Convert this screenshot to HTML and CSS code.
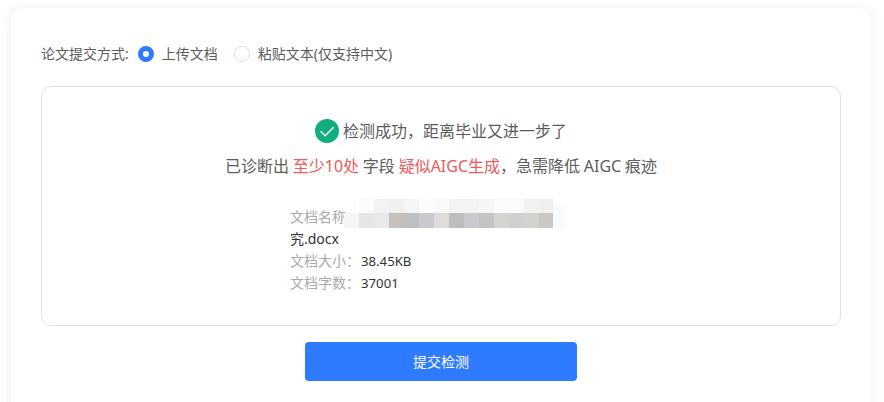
FILE: index.html
```html
<!DOCTYPE html>
<html lang="zh-CN">
<head>
    <title>论文检测</title>
    <meta charset="UTF-8">
    <meta name="viewport" content="width=device-width, initial-scale=1.0">
    <link rel="stylesheet" href="styles.css">
</head>
<body>
    <div class="card">
        <div class="mode-row">
            <span class="mode-label">论文提交方式:</span>
            <label class="radio radio-on"><span class="radio-dot"></span><span>上传文档</span></label>
            <label class="radio"><span class="radio-dot"></span><span>粘贴文本(仅支持中文)</span></label>
        </div>

        <div class="result">
            <div class="result-title">
                <svg class="check-icon" viewBox="0 0 24 24" width="24" height="24">
                    <circle cx="12" cy="12" r="12" fill="#0fae7c"/>
                    <path d="M5.6 12.2l4.6 4.6 8.4-8.6" fill="none" stroke="#fff" stroke-width="1.5"/>
                </svg>
                <span>检测成功，距离毕业又进一步了</span>
            </div>
            <p class="result-desc">已诊断出 <em>至少10处</em> 字段 <em>疑似AIGC生成</em>，急需降低 AIGC 痕迹</p>

            <div class="doc-info">
                <div class="doc-name">
                    <span class="doc-label">文档名称</span>
                    <svg class="mosaic" viewBox="0 0 225 36" width="225" height="36">
                        <defs><filter id="soft"><feGaussianBlur stdDeviation="0.7"/></filter></defs>
                        <g filter="url(#soft)">
                            <rect x="15" y="2" width="15" height="14" fill="#fbfbfb"/>
                            <rect x="30" y="2" width="15" height="14" fill="#f3f3f3"/>
                            <rect x="45" y="2" width="15" height="14" fill="#f0f0f0"/>
                            <rect x="60" y="2" width="15" height="14" fill="#f4f6f6"/>
                            <rect x="75" y="2" width="15" height="14" fill="#fcfcfa"/>
                            <rect x="90" y="2" width="15" height="14" fill="#f9f9f9"/>
                            <rect x="105" y="2" width="30" height="14" fill="#f4f3f3"/>
                            <rect x="135" y="2" width="15" height="14" fill="#f6f6f5"/>
                            <rect x="150" y="2" width="30" height="14" fill="#fbfbfb"/>
                            <rect x="180" y="2" width="15" height="14" fill="#f3f2f1"/>
                            <rect x="195" y="2" width="14" height="14" fill="#f0efed"/>
                            <rect x="0" y="16" width="15" height="15" fill="#f6f6f6"/>
                            <rect x="15" y="16" width="15" height="15" fill="#e6e6e8"/>
                            <rect x="30" y="16" width="15" height="15" fill="#e9e9ea"/>
                            <rect x="45" y="16" width="15" height="15" fill="#c5bfbd"/>
                            <rect x="60" y="16" width="15" height="15" fill="#bfbfc2"/>
                            <rect x="75" y="16" width="15" height="15" fill="#c9c9d0"/>
                            <rect x="90" y="16" width="15" height="15" fill="#dfdcda"/>
                            <rect x="105" y="16" width="15" height="15" fill="#bfbcbe"/>
                            <rect x="120" y="16" width="15" height="15" fill="#c8cacd"/>
                            <rect x="135" y="16" width="15" height="15" fill="#c6c3c6"/>
                            <rect x="150" y="16" width="15" height="15" fill="#d3d5d0"/>
                            <rect x="165" y="16" width="15" height="15" fill="#cfd0ce"/>
                            <rect x="180" y="16" width="15" height="15" fill="#d2d2ce"/>
                            <rect x="195" y="16" width="14" height="15" fill="#c9c8c2"/>
                            <rect x="209" y="8" width="12" height="23" fill="#f9fafb"/>
                        </g>
                    </svg>
                </div>
                <div class="doc-value">究.docx</div>
                <div class="doc-row"><span class="doc-label">文档大小：</span><span class="doc-num">38.45KB</span></div>
                <div class="doc-row"><span class="doc-label">文档字数：</span><span class="doc-num">37001</span></div>
            </div>
        </div>

        <button class="submit-btn" type="button">提交检测</button>
    </div>
</body>
</html>
```

FILE: styles.css
```css
body {
    margin: 0;
    height: 402px;
    overflow: hidden;
    background: #fff;
    font-family: "Noto Sans", "Noto Sans CJK SC", sans-serif;
    font-size: 14px;
    color: #5c5c5c;
}

.card {
    margin: 8px 13px 0 11px;
    padding: 34px 30px 40px;
    background: #fff;
    border-radius: 12px;
    box-shadow: 0 0 12px rgba(190, 210, 215, 0.35);
}

.mode-row {
    display: flex;
    align-items: center;
    height: 24px;
}

.mode-row span:not(.radio-dot) {
    padding-bottom: 2px;
}

.mode-label {
    margin-right: 9px;
}

.radio {
    display: flex;
    align-items: center;
    margin-right: 16px;
}

.radio-dot {
    box-sizing: border-box;
    width: 16px;
    height: 16px;
    margin-right: 8px;
    border: 1px solid #dcdcdc;
    border-radius: 50%;
    background: #fff;
}

.radio-on .radio-dot {
    border: 5px solid #2f7bff;
}

.result {
    box-sizing: border-box;
    height: 240px;
    margin-top: 20px;
    padding-top: 32px;
    border: 1px solid #e2e2e2;
    border-radius: 10px;
}

.result-title {
    display: flex;
    justify-content: center;
    align-items: center;
    gap: 4px;
    height: 24px;
    font-size: 16px;
}

.result-title span {
    padding-bottom: 2px;
}

.result-desc {
    margin: 11px 0 0;
    text-align: center;
    font-size: 16px;
    line-height: 24px;
    word-spacing: -0.4px;
}

.result-desc em {
    font-style: normal;
    color: #ec5a5a;
}

.doc-info {
    width: 300px;
    margin: 28px 0 0 248px;
    color: #333;
    line-height: 22px;
}

.doc-name {
    position: relative;
    height: 22px;
}

.mosaic {
    position: absolute;
    left: 54px;
    top: -9px;
}

.doc-label {
    color: #aaa;
}

.doc-num {
    margin-left: 1px;
    font-size: 13.2px;
}

.submit-btn {
    display: block;
    width: 272px;
    height: 39px;
    margin: 16px auto 0;
    padding: 0 0 2px;
    border: none;
    border-radius: 4px;
    background: #2f7bff;
    color: #fff;
    font: inherit;
    cursor: pointer;
}
```
